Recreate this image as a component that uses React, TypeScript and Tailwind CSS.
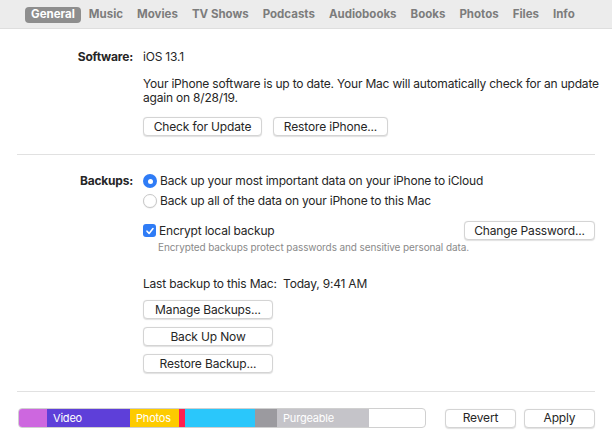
import React from 'react';

const tabs = ['General', 'Music', 'Movies', 'TV Shows', 'Podcasts', 'Audiobooks', 'Books', 'Photos', 'Files', 'Info'];

const segments = [
  { w: 28, color: 'bg-[#cd67df]', label: '' },
  { w: 83, color: 'bg-[#5e3fd9]', label: 'Video' },
  { w: 49, color: 'bg-[#fdcb00]', label: 'Photos' },
  { w: 5, color: 'bg-[#fe1f4f]', label: '' },
  { w: 70, color: 'bg-[#2ac7fb]', label: '' },
  { w: 22, color: 'bg-[#9b9a9f]', label: '' },
  { w: 92, color: 'bg-[#c5c4c9]', label: 'Purgeable' },
];

const Button = ({ children, className = '' }: { children: React.ReactNode; className?: string }) => (
  <button
    className={`h-[19px] rounded-[4px] border border-[#d4d4d4] bg-white text-[12px] tracking-[-0.15px] leading-none text-[#262626] shadow-[0_0.5px_1px_rgba(0,0,0,0.12)] ${className}`}
  >
    {children}
  </button>
);

export default function App() {
  return (
    <div className="w-[612px] h-[444px] bg-white overflow-hidden text-[#262626] tracking-[-0.2px]" style={{ fontFamily: 'Inter, "Noto Sans", sans-serif' }}>
      {/* tab bar */}
      <div className="h-[29px] bg-[#ececec] border-b border-[#dedede] flex items-center pl-[25px] gap-[2px] pt-[1px]">
        {tabs.map((t, i) => (
          <div
            key={t}
            className={
              i === 0
                ? 'h-[16px] px-[6px] rounded-[4px] bg-[#8e8e8e] text-white text-[11.5px] font-bold flex items-center tracking-normal'
                : 'h-[16px] px-[6px] text-[#7c7c7c] text-[11.5px] font-bold flex items-center tracking-normal'
            }
          >
            {t}
          </div>
        ))}
      </div>

      {/* software */}
      <div className="flex pt-[20px]">
        <div className="w-[133px] text-right text-[12px] font-bold leading-[16px]">Software:</div>
        <div className="ml-[10px] flex flex-col">
          <div className="text-[12px] leading-[16px]">iOS 13.1</div>
          <div className="mt-[12px] text-[12px] leading-[14px] w-[465px]">
            Your iPhone software is up to date. Your Mac will automatically check for an update again on 8/28/19.
          </div>
          <div className="mt-[12px] flex gap-[11px]">
            <Button className="w-[119px]">Check for Update</Button>
            <Button className="w-[115px]">Restore iPhone...</Button>
          </div>
        </div>
      </div>

      <div className="mt-[18px] mx-[17px] h-px bg-[#e1e1e1]" />

      {/* backups */}
      <div className="flex pt-[18px]">
        <div className="w-[133px] text-right text-[12px] font-bold leading-[16px]">Backups:</div>
        <div className="ml-[10px] flex flex-col w-[452px]">
          <div className="flex items-center h-[16px] text-[12px]">
            <span className="w-[14px] h-[14px] rounded-full bg-[#2f7cf6] flex items-center justify-center">
              <span className="w-[5px] h-[5px] rounded-full bg-white" />
            </span>
            <span className="ml-[3px]">Back up your most important data on your iPhone to iCloud</span>
          </div>
          <div className="flex items-center h-[16px] mt-[4px] text-[12px]">
            <span className="w-[14px] h-[14px] rounded-full border border-[#c8c8c8] bg-white shadow-[0_0.5px_1px_rgba(0,0,0,0.1)]" />
            <span className="ml-[3px]">Back up all of the data on your iPhone to this Mac</span>
          </div>
          <div className="flex items-center justify-between mt-[12px] h-[19px]">
            <div className="flex items-center text-[12px]">
              <span className="w-[13px] h-[13px] rounded-[3px] bg-[#2f7cf6] flex items-center justify-center">
                <svg width="10" height="10" viewBox="0 0 10 10">
                  <path d="M2 5.2 L4.1 7.4 L8 2.6" fill="none" stroke="white" strokeWidth="1.6" strokeLinecap="round" strokeLinejoin="round" />
                </svg>
              </span>
              <span className="ml-[3px]">Encrypt local backup</span>
            </div>
            <Button className="w-[131px]">Change Password...</Button>
          </div>
          <div className="ml-[15px] mt-[1px] text-[10px] leading-[13px] text-[#8a8a8a] tracking-[-0.1px]">
            Encrypted backups protect passwords and sensitive personal data.
          </div>
          <div className="mt-[22px] text-[12px] leading-[16px]">Last backup to this Mac:&nbsp; Today, 9:41 AM</div>
          <div className="mt-[8px] flex flex-col gap-[8px] w-[130px]">
            <Button className="w-[130px]">Manage Backups...</Button>
            <Button className="w-[130px]">Back Up Now</Button>
            <Button className="w-[130px]">Restore Backup...</Button>
          </div>
        </div>
      </div>

      <div className="mt-[18px] mx-[17px] h-px bg-[#e1e1e1]" />

      {/* storage bar */}
      <div className="flex items-center pl-[18px] pt-[16px]">
        <div className="flex w-[408px] h-[20px] rounded-[4px] border border-[#d0d0d0] overflow-hidden bg-white">
          {segments.map((s, i) => (
            <div
              key={i}
              className={`${s.color} h-full flex items-center pl-[6px] text-white text-[11px] shrink-0`}
              style={{ width: s.w }}
            >
              {s.label}
            </div>
          ))}
        </div>
        <Button className="ml-[19px] w-[71px] h-[19px]">Revert</Button>
        <Button className="ml-[8px] w-[71px] h-[19px]">Apply</Button>
      </div>
    </div>
  );
}
